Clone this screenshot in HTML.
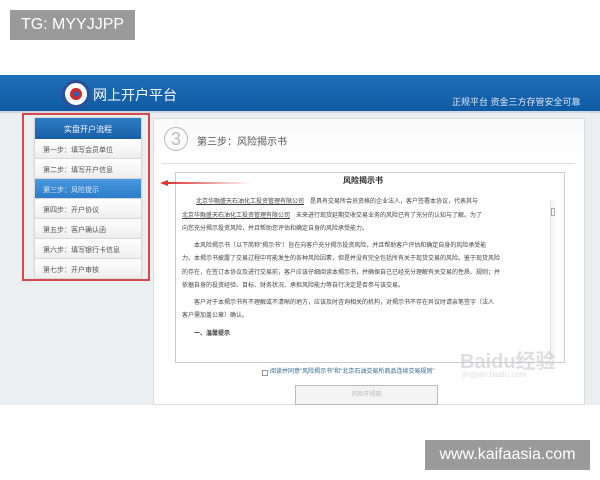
<!DOCTYPE html>
<html><head><meta charset="utf-8"><style>
*{margin:0;padding:0;box-sizing:border-box}
body{width:600px;height:480px;position:relative;background:#fff;font-family:"Liberation Sans","Noto Sans CJK SC",sans-serif;overflow:hidden}
.a{position:absolute}
.wm{background:#9a9a9a;color:#fff;font-size:16px;display:flex;align-items:center;justify-content:center}
.hdr{left:0;top:75px;width:600px;height:38px;background:linear-gradient(#1f6fb8,#0f5aa3);border-bottom:2px solid #cfd8e0}
.body{left:0;top:113px;width:600px;height:292px;background:#eceff1}
.it{height:20px;border-bottom:1px solid #d8d8d8;background:linear-gradient(#fff,#eee);font-size:7px;color:#555;padding:6px 0 0 8px}
.t{font-size:6px;color:#444;line-height:13.5px;white-space:nowrap}
</style></head><body>
<div class="a wm" style="left:10px;top:10px;width:125px;height:30px">TG: MYYJJPP</div>
<div class="a hdr">
 <div class="a" style="left:62px;top:5px;width:28px;height:28px;border-radius:50%;background:#fff;border:3px solid #2a4f98"><div style="margin:5px auto;width:12px;height:12px;border-radius:50%;background:#2a5fb8;border:3px solid #d22"></div></div>
 <div class="a" style="left:93px;top:10px;color:#fff;font-size:14px">网上开户平台</div>
 <div class="a" style="left:452px;top:20px;color:#dfe9f5;font-size:9px">正规平台 资金三方存管安全可靠</div>
</div>
<div class="a body"></div>
<div class="a" style="left:22px;top:113px;width:128px;height:168px;border:2px solid #d9474a"></div>
<div class="a" style="left:35px;top:118px;width:106px;height:160px;background:#fff;box-shadow:0 0 2px #aaa">
 <div style="height:21px;background:linear-gradient(#2e7cc4,#1a5fa5);color:#fff;font-size:8px;text-align:center;padding-top:6px">实盘开户流程</div>
 <div class="it">第一步：填写会员单位</div>
 <div class="it">第二步：填写开户信息</div>
 <div class="it" style="background:linear-gradient(#4a9ae0,#2b7bc8);color:#dbe9f7">第三步：风险提示</div>
 <div class="it">第四步：开户协议</div>
 <div class="it">第五步：客户确认函</div>
 <div class="it">第六步：填写银行卡信息</div>
 <div class="it">第七步：开户审核</div>
</div>
<div class="a" style="left:153px;top:118px;width:432px;height:287px;background:linear-gradient(#fafafa,#fff 50px);border:1px solid #ddd"></div>
<div class="a" style="left:164px;top:127px;width:24px;height:24px;border-radius:50%;border:1px solid #bbb;color:#bbb;font-size:18px;text-align:center;line-height:22px">3</div>
<div class="a" style="left:197px;top:133px;font-size:10px;color:#555">第三步：风险揭示书</div>
<div class="a" style="left:162px;top:163px;width:413px;height:1px;background:#ddd"></div>
<div class="a" style="left:175px;top:172px;width:390px;height:191px;background:#fff;border:1px solid #ccc"></div>
<div class="a" style="left:343px;top:175px;font-size:8px;color:#222;font-weight:bold">风险揭示书</div>
<div class="a" style="left:160px;top:180px;border-right:8px solid #d33;border-top:3px solid transparent;border-bottom:3px solid transparent"></div>
<div class="a" style="left:167px;top:182px;width:85px;height:2px;background:linear-gradient(90deg,#d33,rgba(221,51,51,0))"></div>
<div class="a" style="left:550px;top:200px;width:5px;height:160px;background:#f6f6f6;border-left:1px solid #e0e0e0"></div>
<div class="a" style="left:551px;top:208px;width:4px;height:8px;border:1px solid #aaa;background:#fff"></div>
<div class="a t" style="left:182px;top:196px;width:368px">
<div style="padding-left:14px"><u>北京华融盛天石油化工投资管理有限公司</u>　是具有交易所会员资格的企业法人，客户签署本协议，代表其与</div>
<div><u>北京华融盛天石油化工投资管理有限公司</u>　未来进行现货延期交收交易业务的风险已有了充分的认知与了解。为了</div>
<div>向您充分揭示投资风险，并且帮助您评估和确定自身的风险承受能力。</div>
<div style="padding-left:12px;margin-top:3px">本风险揭示书（以下简称"揭示书"）旨在向客户充分揭示投资风险，并且帮助客户评估和确定自身的风险承受能</div>
<div>力。本揭示书披露了交易过程中可能发生的各种风险因素，但是并没有完全包括所有关于现货交易的风险。鉴于现货风险</div>
<div>的存在，在签订本协议及进行交易前，客户应该仔细阅读本揭示书，并确保自己已经充分理解有关交易的性质、规则；并</div>
<div>依据自身的投资经验、目标、财务状况、承担风险能力等自行决定是否参与该交易。</div>
<div style="padding-left:12px;margin-top:3px">客户对于本揭示书有不理解或不清晰的地方，应该及时咨询相关的机构，对揭示书不存在异议时请亲笔签字（法人</div>
<div>客户需加盖公章）确认。</div>
<div style="padding-left:12px;margin-top:4px;font-weight:bold;color:#333">一、温馨提示</div>
</div>
<div class="a" style="left:262px;top:370px;width:6px;height:6px;border:1px solid #999"></div>
<div class="a t" style="left:270px;top:366px;color:#2a6a90">阅读并同意"风险揭示书"和"北京石油交易所商品连续交易规则"</div>
<div class="a" style="left:295px;top:385px;width:143px;height:20px;border:1px solid #bbb;background:#f4f4f4;color:#bbb;font-size:6px;text-align:center;line-height:18px">风险开揭晓</div>
<div class="a" style="left:460px;top:345px;color:rgba(200,200,205,.6);font-size:20px;font-weight:bold">Baidu经验</div>
<div class="a" style="left:462px;top:370px;color:rgba(200,200,205,.6);font-size:8px">jingyan.baidu.com</div>
<div class="a wm" style="left:425px;top:440px;width:165px;height:30px">www.kaifaasia.com</div>
</body></html>
